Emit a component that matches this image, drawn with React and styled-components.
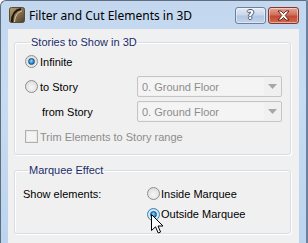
import React from "react";
import styled, { createGlobalStyle } from "styled-components";

const GlobalStyle = createGlobalStyle`
  html, body { margin: 0; padding: 0; background: #ffffff; }
  body { font-family: "Liberation Sans", Arial, sans-serif; }
`;

const Window = styled.div`
  position: relative;
  width: 308px;
  height: 243px;
  box-sizing: border-box;
  overflow: hidden;
  display: flex;
  flex-direction: column;
  border-top: 1px solid #5d6e80;
  border-left: 1px solid #5d6e80;
  border-right: 2px solid #6c829c;
  border-top-left-radius: 6px;
  background: linear-gradient(to bottom, #c3d8ef, #c7dcf2 40%, #bcd4ee);
`;

const TitleBar = styled.div`
  height: 28px;
  display: flex;
  align-items: center;
  padding: 0 7px 0 8px;
  gap: 4px;
`;

const Title = styled.span`
  flex: 1;
  font-family: "Noto Sans", "Liberation Sans", sans-serif;
  font-size: 12px;
  color: #000;
`;

const CaptionButton = styled.div`
  width: 31px;
  height: 17px;
  box-sizing: border-box;
  border-radius: 3px;
  display: flex;
  align-items: center;
  justify-content: center;
  border: 1px solid ${(p) => (p.$close ? "#83362c" : "#6e7f98")};
  background: ${(p) =>
    p.$close
      ? "linear-gradient(to bottom, #e8a493, #d0705e 45%, #c24a33 55%, #d2694f)"
      : "linear-gradient(to bottom, #e3ebf6, #c9d7ec 45%, #b3c6e2 55%, #c2d4ec)"};
  box-shadow: inset 0 0 0 1px rgba(255, 255, 255, 0.45);
  margin-left: ${(p) => (p.$close ? "-2px" : "0")};
`;

const HelpGlyph = styled.span`
  font-family: "DejaVu Sans", sans-serif;
  font-weight: bold;
  font-size: 12px;
  line-height: 12px;
  color: #fff;
  text-shadow: -1px 0 #4a5a72, 1px 0 #4a5a72, 0 -1px #4a5a72, 0 1px #4a5a72;
`;

const Client = styled.div`
  flex: 1;
  margin: 0 7px 0 7px;
  background: #f0f0f0;
  padding: 6px 8px 0 6px;
`;

const Group = styled.fieldset`
  margin: ${(p) => (p.$first ? "0" : "8px 0 0 0")};
  padding: 0 ${(p) => p.$padRight}px ${(p) => p.$padBottom}px ${(p) => p.$padLeft}px;
  border: 1px solid #d5dfe5;
  border-radius: 3px;
  box-shadow: inset 1px 1px 0 #ffffff, 1px 1px 0 #ffffff;
  min-width: 0;
`;

const Legend = styled.legend`
  margin-left: 5px;
  padding: 0 1px;
  font-size: 11px;
  line-height: 14px;
  color: #1b2d6b;
`;

const Row = styled.div`
  display: grid;
  grid-template-columns: ${(p) => p.$cols};
  align-items: center;
  height: ${(p) => p.$h}px;
  margin-top: ${(p) => p.$top || 0}px;
`;

const Label = styled.span`
  font-size: 11px;
  color: ${(p) => (p.$disabled ? "#8d8d8d" : "#000")};
  padding-left: ${(p) => p.$indent || 0}px;
  white-space: nowrap;
`;

const Radio = styled.span`
  width: 13px;
  height: 13px;
  box-sizing: border-box;
  border-radius: 50%;
  position: relative;
  border: 1px solid ${(p) => (p.$hover ? "#3c7fb1" : "#8e8f8f")};
  background: ${(p) =>
    p.$hover
      ? "radial-gradient(circle at 50% 60%, #e6f4fc 0%, #cce8f8 60%, #a9d5f0 100%)"
      : "radial-gradient(circle at 50% 60%, #f6f6f6 0%, #e4e4e4 60%, #cfcfcf 100%)"};
  &::after {
    content: "";
    display: ${(p) => (p.$checked ? "block" : "none")};
    position: absolute;
    left: 2px;
    top: 2px;
    width: 7px;
    height: 7px;
    box-sizing: border-box;
    border-radius: 50%;
    border: 1px solid #19507f;
    background: radial-gradient(circle at 45% 40%, #8fdcfb 0%, #2b8bd0 55%, #145592 100%);
  }
`;

const Checkbox = styled.span`
  width: 13px;
  height: 13px;
  box-sizing: border-box;
  border: 1px solid #b1b1b1;
  background: #f4f4f4;
  box-shadow: inset 0 0 0 1px #e8e8e8;
`;

const Select = styled.div`
  height: 21px;
  box-sizing: border-box;
  border: 1px solid #c5c5c5;
  border-radius: 2px;
  background: #f0f0f0;
  display: flex;
  align-items: stretch;
`;

const SelectValue = styled.span`
  flex: 1;
  margin: 1px 0 1px 1px;
  background: #f4f4f4;
  font-size: 11px;
  color: #8d8d8d;
  display: flex;
  align-items: center;
  padding-left: 3px;
`;

const SelectArrow = styled.span`
  width: 17px;
  display: flex;
  align-items: center;
  justify-content: center;
`;

const Cursor = styled.svg`
  position: absolute;
  left: 150px;
  top: 213px;
`;

const AppIcon = () => (
  <svg width="16" height="16" viewBox="0 0 16 16">
    <defs>
      <linearGradient id="ai" x1="0" y1="0" x2="1" y2="1">
        <stop offset="0" stopColor="#b59a6e" />
        <stop offset="0.5" stopColor="#8a7250" />
        <stop offset="1" stopColor="#4a3c2a" />
      </linearGradient>
    </defs>
    <rect x="0.5" y="0.5" width="15" height="15" rx="2" fill="url(#ai)" stroke="#5a4a36" />
    <path d="M3 15 C3 8 6 3 12 2" stroke="#1e1810" strokeWidth="2.2" fill="none" />
    <path d="M5.5 15 C6 9 8.5 5 13 4" stroke="#d9c9a6" strokeWidth="1" fill="none" />
  </svg>
);

const CloseGlyph = () => (
  <svg width="13" height="11" viewBox="0 0 13 11">
    <path
      d="M1 1 L4 1 L6.5 3.5 L9 1 L12 1 L8.2 5.5 L12 10 L9 10 L6.5 7.5 L4 10 L1 10 L4.8 5.5 Z"
      fill="#ffffff"
      stroke="#5a1a10"
      strokeWidth="0.9"
      strokeLinejoin="round"
    />
  </svg>
);

const DropArrow = () => (
  <svg width="9" height="5" viewBox="0 0 9 5">
    <path d="M0 0 L9 0 L4.5 5 Z" fill="#a7a7a7" />
  </svg>
);

const StorySelect = () => (
  <Select>
    <SelectValue>0. Ground Floor</SelectValue>
    <SelectArrow>
      <DropArrow />
    </SelectArrow>
  </Select>
);

export default function App() {
  return (
    <>
      <GlobalStyle />
      <Window>
        <TitleBar>
          <AppIcon />
          <Title>Filter and Cut Elements in 3D</Title>
          <CaptionButton>
            <HelpGlyph>?</HelpGlyph>
          </CaptionButton>
          <CaptionButton $close>
            <CloseGlyph />
          </CaptionButton>
        </TitleBar>
        <Client>
          <Group $first $padLeft={10} $padRight={9} $padBottom={5}>
            <Legend>Stories to Show in 3D</Legend>
            <Row $cols="15px 97px 145px" $h={25}>
              <Radio $checked />
              <Label>Infinite</Label>
            </Row>
            <Row $cols="15px 97px 145px" $h={25}>
              <Radio />
              <Label>to Story</Label>
              <StorySelect />
            </Row>
            <Row $cols="15px 97px 145px" $h={25}>
              <span />
              <Label $indent={2}>from Story</Label>
              <StorySelect />
            </Row>
            <Row $cols="15px 1fr" $h={25}>
              <Checkbox />
              <Label $disabled>Trim Elements to Story range</Label>
            </Row>
          </Group>
          <Group $padLeft={8} $padRight={8} $padBottom={9}>
            <Legend>Marquee Effect</Legend>
            <Row $cols="124px 14px 1fr" $h={21} $top={6}>
              <Label>Show elements:</Label>
              <Radio />
              <Label>Inside Marquee</Label>
            </Row>
            <Row $cols="124px 14px 1fr" $h={20}>
              <span />
              <Radio $checked $hover />
              <Label>Outside Marquee</Label>
            </Row>
          </Group>
        </Client>
        <Cursor width="13" height="21" viewBox="0 0 13 21">
          <path
            d="M0.5 0.5 L0.5 16.5 L4.5 12.8 L7.2 19 L9.6 18 L7 12 L12 12 Z"
            fill="#ffffff"
            stroke="#000000"
            strokeWidth="1"
            strokeLinejoin="miter"
          />
        </Cursor>
      </Window>
    </>
  );
}
